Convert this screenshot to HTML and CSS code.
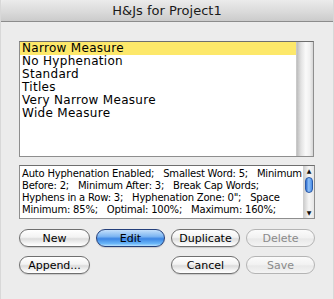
FILE: index.html
```html
<!DOCTYPE html>
<html>
<head>
<title>H&amp;Js for Project1</title>
<link rel="stylesheet" href="styles.css">
</head>
<body>
<div class="window">
    <div class="titlebar">H&amp;Js for Project1</div>
    <div class="content">
        <div class="list">
            <div class="items">
                <div class="item selected">Narrow Measure</div>
                <div class="item">No Hyphenation</div>
                <div class="item">Standard</div>
                <div class="item">Titles</div>
                <div class="item">Very Narrow Measure</div>
                <div class="item">Wide Measure</div>
            </div>
            <div class="track"></div>
        </div>
        <div class="desc">
            <div class="desc-text">Auto Hyphenation Enabled;   Smallest Word: 5;   Minimum<br>Before: 2;   Minimum After: 3;   Break Cap Words;<br>Hyphens in a Row: 3;   Hyphenation Zone: 0";   Space<br>Minimum: 85%;   Optimal: 100%;   Maximum: 160%;</div>
            <div class="mini-scroll">
                <div class="arrow">&#9650;</div>
                <div class="mini-track"><div class="thumb"></div></div>
                <div class="arrow">&#9660;</div>
            </div>
        </div>
        <div class="buttons">
            <button class="btn">New</button>
            <button class="btn default">Edit</button>
            <button class="btn">Duplicate</button>
            <button class="btn" disabled>Delete</button>
            <button class="btn">Append...</button>
            <span></span>
            <button class="btn">Cancel</button>
            <button class="btn" disabled>Save</button>
        </div>
    </div>
</div>
</body>
</html>
```

FILE: styles.css
```css
body {
    margin: 0;
    font-family: "DejaVu Sans", sans-serif;
    background-color: #ececec;
}

.window {
    width: 334px;
    height: 299px;
    background-color: #ececec;
    box-sizing: border-box;
    border-left: 1px solid #d8d8d8;
    border-right: 1px solid #d8d8d8;
}

.titlebar {
    height: 21px;
    line-height: 21px;
    text-align: center;
    font-size: 13px;
    color: #1a1a1a;
    background: linear-gradient(#ebebeb, #d9d9d9 60%, #cbcbcb);
    border-bottom: 1px solid #8c8c8c;
    border-radius: 5px 5px 0 0;
}

.content {
    padding: 19px 18px 0 18px;
}

.list {
    display: flex;
    width: 295px;
    height: 116px;
    box-sizing: border-box;
    border: 1px solid #8e8e8e;
    border-top-color: #6e6e6e;
    background: #fff;
}

.items {
    flex: 1;
    font-size: 12px;
    letter-spacing: 0.3px;
    color: #000;
}

.item {
    height: 13px;
    line-height: 13px;
    padding-left: 2px;
}

.selected {
    background-color: #fde86a;
}

.track {
    width: 16px;
    background: linear-gradient(to right, #bdbdbd, #e2e2e2 25%, #fafafa 55%, #f0f0f0 80%, #d6d6d6);
    border-left: 1px solid #c9c9c9;
}

.desc {
    display: flex;
    margin-top: 8px;
    width: 296px;
    height: 54px;
    box-sizing: border-box;
    border: 1px solid #8e8e8e;
    border-top-color: #6e6e6e;
    background: #fff;
}

.desc-text {
    flex: 1;
    white-space: pre;
    font-size: 10px;
    letter-spacing: -0.2px;
    line-height: 12px;
    padding: 2px 0 0 2px;
    overflow: hidden;
    color: #000;
}

.mini-scroll {
    width: 10px;
    display: flex;
    flex-direction: column;
    background: linear-gradient(to right, #d0d0d0, #f6f6f6 50%, #e6e6e6);
    border-left: 1px solid #cfcfcf;
}

.arrow {
    height: 10px;
    font-size: 6px;
    line-height: 10px;
    text-align: center;
    color: #111;
}

.mini-track {
    flex: 1;
    padding-top: 1px;
}

.thumb {
    height: 16px;
    margin: 0 1px;
    border-radius: 5px;
    border: 1px solid #2a5aa8;
    box-sizing: border-box;
    background: linear-gradient(to right, #2f6cd0, #8fc1f7 45%, #4a8de8);
}

.buttons {
    display: grid;
    grid-template-columns: 71px 69px 69px 69px;
    column-gap: 6px;
    row-gap: 9px;
    margin-top: 10px;
}

.btn {
    height: 18px;
    padding: 0;
    font-family: "DejaVu Sans", sans-serif;
    font-size: 11px;
    color: #000;
    border: 1px solid #6f6f6f;
    border-radius: 9px;
    background: linear-gradient(#ffffff, #f3f3f3 45%, #dcdcdc 55%, #f6f6f6 85%, #ffffff);
    box-shadow: 0 1px 1px rgba(0, 0, 0, 0.15);
}

.default {
    border-color: #243f7a;
    background: linear-gradient(#c4e0fb, #7eb6f2 40%, #3d86e4 55%, #6ab6f8 85%, #b9e2ff);
}

.btn:disabled {
    color: #8a8a8a;
    border-color: #b4b4b4;
    background: linear-gradient(#fbfbfb, #f1f1f1 50%, #e8e8e8 55%, #f4f4f4);
    box-shadow: none;
}
```
